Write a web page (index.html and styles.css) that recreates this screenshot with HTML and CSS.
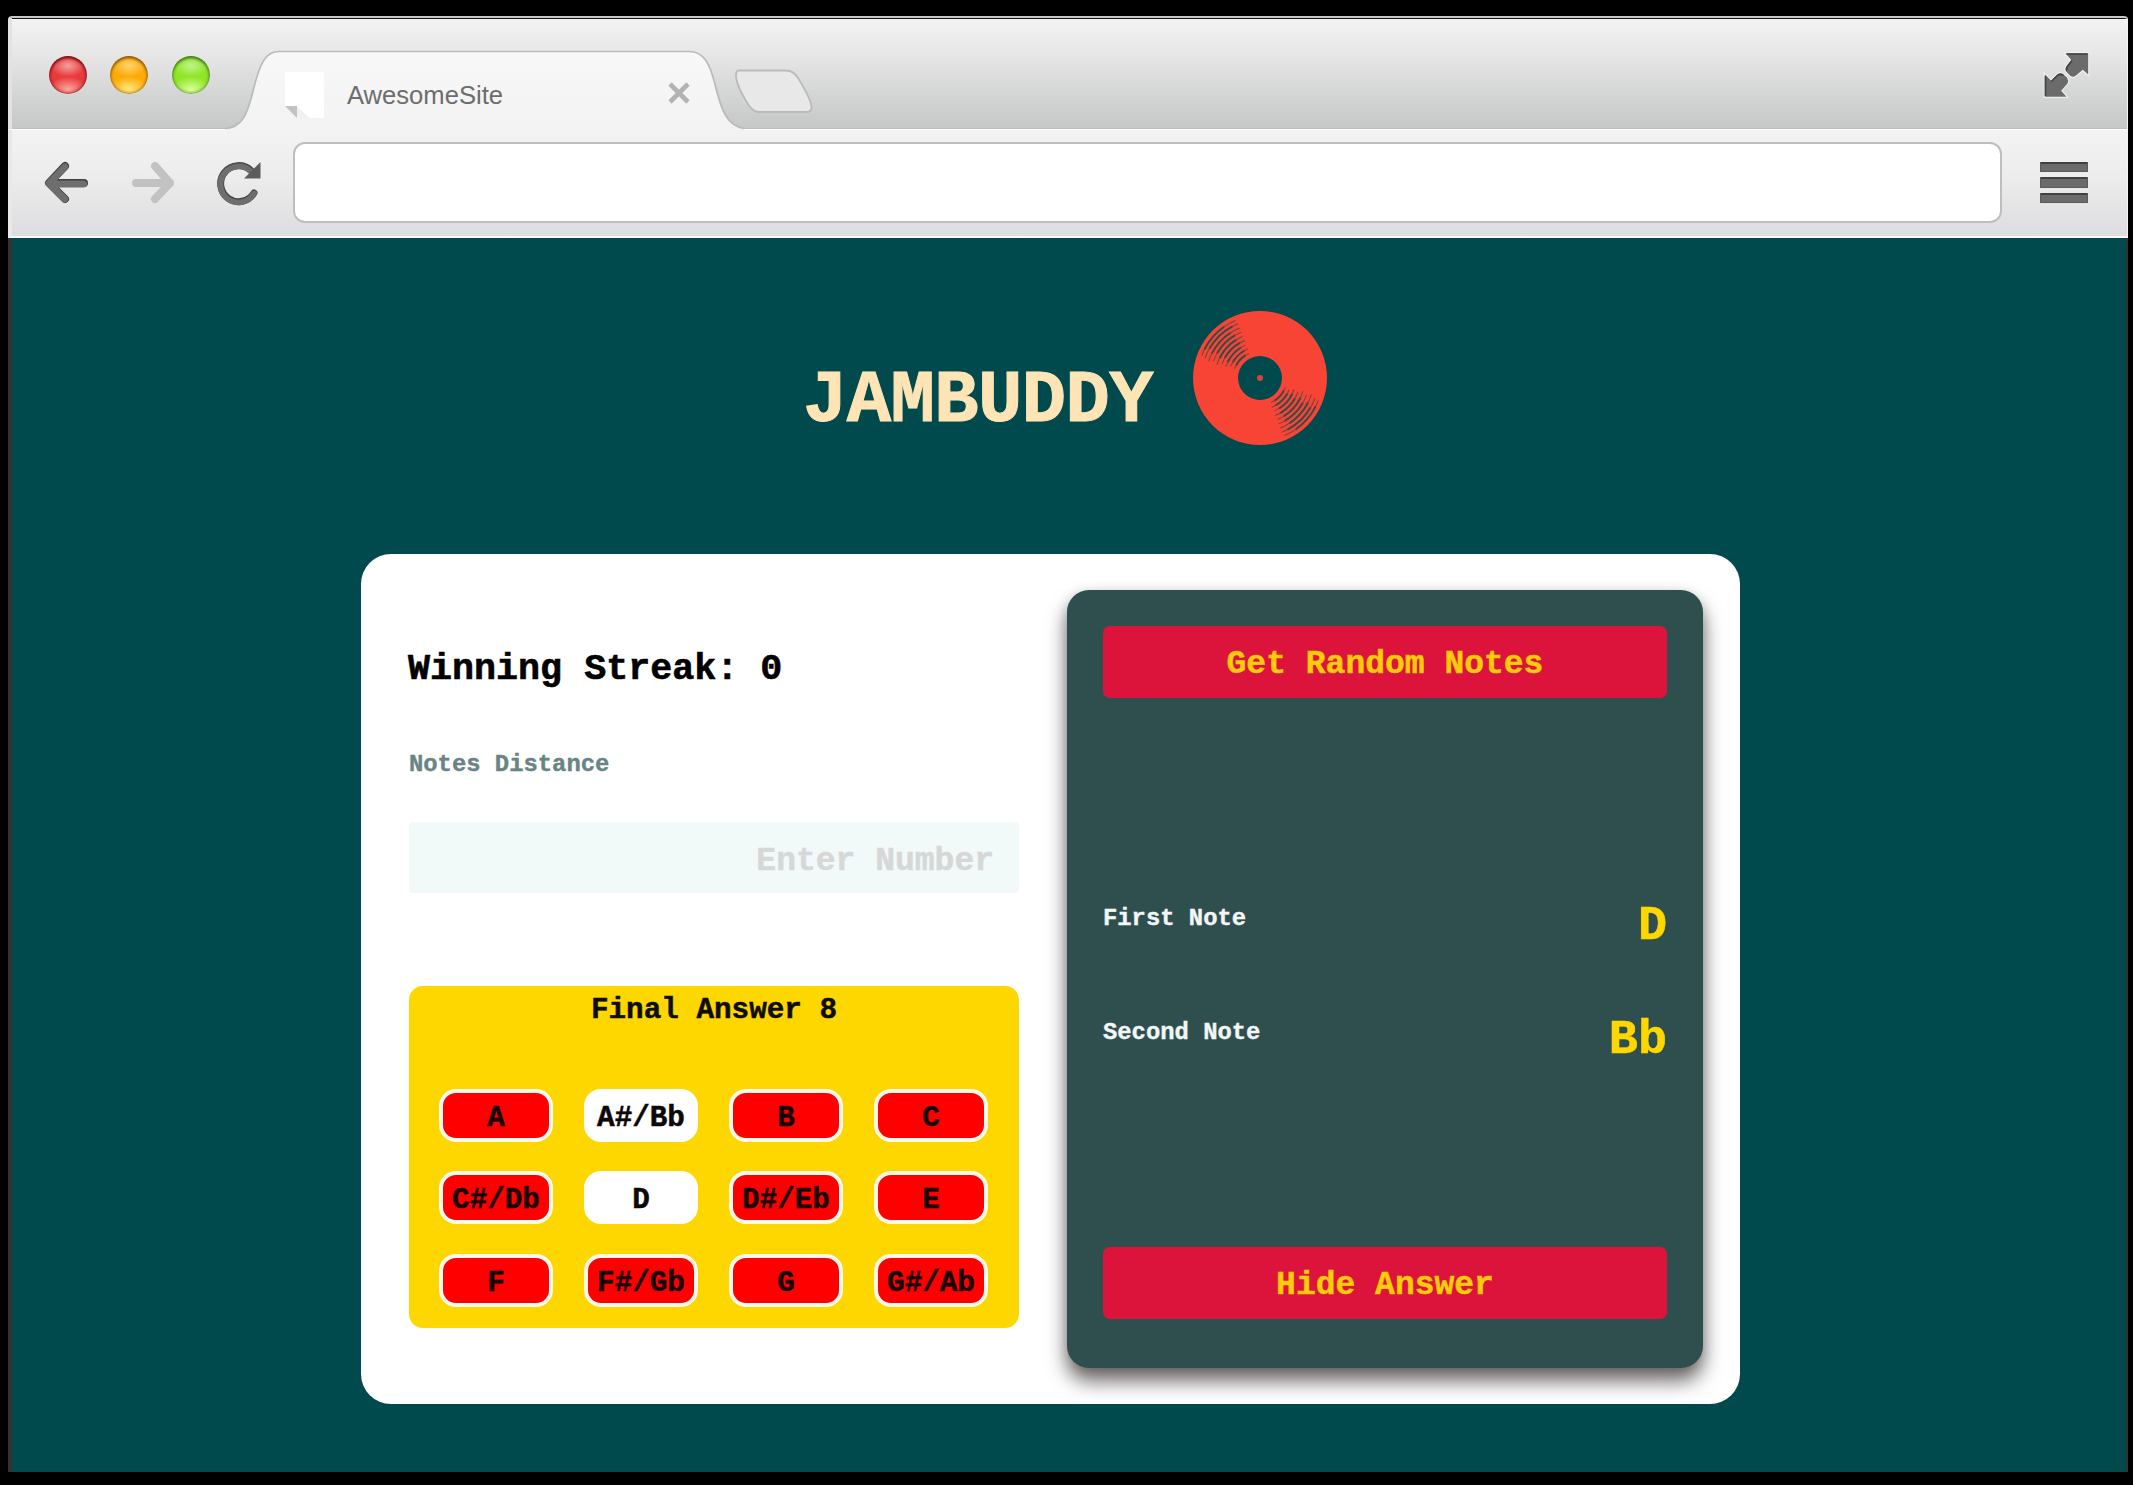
FILE: index.html
```html
<!DOCTYPE html>
<html lang="en">
<head>
<meta charset="utf-8">
<title>JamBuddy</title>
<link rel="stylesheet" href="styles.css">
</head>
<body>
<div class="window">
  <header class="titlebar">
    <div class="lights">
      <span class="light light-red"></span>
      <span class="light light-yellow"></span>
      <span class="light light-green"></span>
    </div>
    <div class="tab">
      <svg class="tab-shape" width="520" height="82" viewBox="0 0 520 82">
        <defs>
          <linearGradient id="tabFill" x1="0" y1="0" x2="0" y2="1">
            <stop offset="0" stop-color="#f8f8f8"/>
            <stop offset="1" stop-color="#f2f2f2"/>
          </linearGradient>
        </defs>
        <path d="M0 79C17 78 23 65 29 41C36 12 42 2 54 2H464C478 2 484 14 489 34C496 63 502 76 519 79V82H0Z" fill="url(#tabFill)"/>
        <path d="M0 78.500C17 78 22 65 28 41C35 12 41 1.500 54 1.500H464C479 1.500 485 14 490 34C497 63 503 76 519 78.500" fill="none" stroke="#b9bbba" stroke-width="1.600"/>
      </svg>
      <svg class="favicon" width="40" height="47" viewBox="0 0 40 47">
        <path d="M0 0H39V46H24L12 34H0Z" fill="#fff"/>
        <path d="M12 34L24 46H12Z" fill="#f1f1f1"/>
        <path d="M0 34H12V46Z" fill="#c2c2c2"/>
      </svg>
      <span class="tab-label">AwesomeSite</span>
      <svg class="tab-close" width="22" height="22" viewBox="0 0 22 22">
        <path d="M2 2L20 20M20 2L2 20" stroke="#b3b3b3" stroke-width="4.600"/>
      </svg>
    </div>
    <svg class="new-tab" width="78" height="45" viewBox="0 0 78 45">
      <path d="M4 1.500H51C57 1.500 60 4 63 9C69 19 76 30 76.500 38C76.500 42 75 43 72 43H24C19 43 16 40 13 35C8 27 1 16 1 6Q1 1.500 4 1.500Z" fill="#e8e8e8" stroke="#b9bbba" stroke-width="1.800"/>
    </svg>
    <svg class="expand" width="47" height="47" viewBox="0 0 47 47">
      <g fill="#6b6b6b" stroke="#f6f6f6" stroke-width="2" paint-order="stroke">
        <path d="M22.500 1.300H45.200V22.500L39.800 17.700L33 23.500Q30 26 27 23.500L24 20.500Q21.500 17.500 23.500 14L28.200 8Z"/>
        <path d="M1.800 22.300L8.200 28.700L14.500 22.200Q17.500 20 20.500 22.500L24 25.500Q26 28.500 24.500 31.500L18.200 38.700L23.500 44.700H1.800Z"/>
      </g>
      <path d="M23.500 2H44.500M24 19Q22.500 17 24.500 14.500L29 8.500M2.500 24V44M8.200 29.500L15 23Q18 21.500 20.500 23.500" fill="none" stroke="#424242" stroke-width="1.600"/>
    </svg>
  </header>

  <nav class="toolbar">
    <svg class="back" width="46" height="44" viewBox="0 0 46 44">
      <path d="M6 22H40M21 5L5 22L21 38" fill="none" stroke="#404040" stroke-width="8" stroke-linecap="round" stroke-linejoin="round"/>
      <path d="M6 23H39.500M21 6L5 22.500L20.500 38" fill="none" stroke="#6e6e6e" stroke-width="7" stroke-linecap="round" stroke-linejoin="round"/>
    </svg>
    <svg class="forward" width="46" height="44" viewBox="0 0 46 44">
      <path d="M40 22H6M25 5L40 22L25 38" fill="none" stroke="#c2c2c2" stroke-width="8" stroke-linecap="round" stroke-linejoin="round"/>
    </svg>
    <svg class="reload" width="46" height="46" viewBox="0 0 46 46">
      <path d="M38 32A18 18 0 1 1 35 9.500" fill="none" stroke="#484848" stroke-width="7" stroke-linecap="round"/>
      <path d="M38 32.500A18 18 0 1 1 35 10.500" fill="none" stroke="#6e6e6e" stroke-width="5.600" stroke-linecap="round"/>
      <path d="M44.500 1V17.500H28Z" fill="#5c5c5c"/>
    </svg>
    <div class="address"></div>
    <div class="menu"><span></span><span></span><span></span></div>
  </nav>

  <main class="page">
    <div class="brand">
      <h1>JAMBUDDY</h1>
      <svg class="disc" width="134" height="134" viewBox="-67 -67 134 134">
        <circle r="67" fill="#f84435"/>
        <g fill="none" stroke="#6b4842" stroke-width="1">
          <circle r="62.500" pathLength="360" stroke-dasharray="46 134" transform="rotate(21)"/>
          <circle r="58.500" pathLength="360" stroke-dasharray="48 132" transform="rotate(20)"/>
          <circle r="54" pathLength="360" stroke-dasharray="50 130" transform="rotate(18)"/>
          <circle r="49.500" pathLength="360" stroke-dasharray="48 132" transform="rotate(20)"/>
          <circle r="45" pathLength="360" stroke-dasharray="50 130" transform="rotate(17)"/>
          <circle r="40.500" pathLength="360" stroke-dasharray="48 132" transform="rotate(20)"/>
          <circle r="36" pathLength="360" stroke-dasharray="48 132" transform="rotate(18)"/>
          <circle r="31.500" pathLength="360" stroke-dasharray="46 134" transform="rotate(22)"/>
          <circle r="27" pathLength="360" stroke-dasharray="46 134" transform="rotate(20)"/>
        </g>
        <g fill="none" stroke="#344b4a" stroke-width="1.900">
          <circle r="62.500" pathLength="360" stroke-dasharray="28 152" transform="rotate(27)"/>
          <circle r="58.500" pathLength="360" stroke-dasharray="32 148" transform="rotate(30)"/>
          <circle r="54" pathLength="360" stroke-dasharray="30 150" transform="rotate(27)"/>
          <circle r="49.500" pathLength="360" stroke-dasharray="30 150" transform="rotate(30)"/>
          <circle r="45" pathLength="360" stroke-dasharray="32 148" transform="rotate(26)"/>
          <circle r="40.500" pathLength="360" stroke-dasharray="30 150" transform="rotate(30)"/>
          <circle r="36" pathLength="360" stroke-dasharray="32 148" transform="rotate(26)"/>
          <circle r="31.500" pathLength="360" stroke-dasharray="30 150" transform="rotate(30)"/>
          <circle r="27" pathLength="360" stroke-dasharray="30 150" transform="rotate(28)"/>
        </g>
        <circle r="22" fill="#00494d"/>
        <circle r="3" fill="#d8443a"/>
      </svg>
    </div>

    <section class="card">
      <div class="guess">
        <h2>Winning Streak: 0</h2>
        <div class="distance">Notes Distance</div>
        <div class="field">Enter Number</div>
        <div class="answer">
          <div class="answer-title">Final Answer 8</div>
          <div class="keys">
            <span class="key">A</span>
            <span class="key key-on">A#/Bb</span>
            <span class="key">B</span>
            <span class="key">C</span>
            <span class="key">C#/Db</span>
            <span class="key key-on">D</span>
            <span class="key">D#/Eb</span>
            <span class="key">E</span>
            <span class="key">F</span>
            <span class="key">F#/Gb</span>
            <span class="key">G</span>
            <span class="key">G#/Ab</span>
          </div>
        </div>
      </div>
      <div class="panel">
        <div class="button">Get Random Notes</div>
        <div class="notes">
          <div class="note"><span class="note-name">First Note</span><span class="note-value">D</span></div>
          <div class="note"><span class="note-name">Second Note</span><span class="note-value">Bb</span></div>
        </div>
        <div class="button">Hide Answer</div>
      </div>
    </section>
  </main>
</div>
</body>
</html>
```
FILE: styles.css
```css
* {
  box-sizing: border-box;
}

body {
  margin: 0;
  height: 1485px;
  padding: 16px 5px 13px 8px;
  background: #000;
  overflow: hidden;
}

svg {
  display: block;
  flex: none;
}

.window {
  width: 2120px;
  height: 1456px;
  display: flex;
  flex-direction: column;
}

/* Title bar */
.titlebar {
  height: 113px;
  display: flex;
  align-items: flex-start;
  border-top: 2px solid #c9c9c9;
  border-left: 4px solid #e2e2e2;
  border-right: 1px solid #f4f4f4;
  border-radius: 4px 4px 0 0;
  background: linear-gradient(#111 0, #111 1px, #f3f3f3 1px, #e4e5e4 40px, #c5c8c7 110px, #b4b6b5 111px);
}

.lights {
  display: flex;
  gap: 23.500px;
  padding: 38px 0 0 36.500px;
}

.light {
  width: 38px;
  height: 38px;
  border-radius: 50%;
}

.light-red {
  background: radial-gradient(ellipse 19px 13px at 50% 88%, #ffa79f, transparent), radial-gradient(ellipse 17px 11px at 50% 26%, #f3a09b, transparent), #e83a3c;
  box-shadow: inset 0 2px 3px #780b10, inset 0 0 3px 1px #a03032;
}

.light-yellow {
  background: radial-gradient(ellipse 19px 13px at 50% 88%, #ffec7f, transparent), radial-gradient(ellipse 17px 11px at 50% 26%, #ffd36c, transparent), #fdaa08;
  box-shadow: inset 0 2px 3px #8a5300, inset 0 0 3px 1px #b08028;
}

.light-green {
  background: radial-gradient(ellipse 19px 13px at 50% 88%, #d9ff9c, transparent), radial-gradient(ellipse 17px 11px at 50% 26%, #bff38a, transparent), #8fe626;
  box-shadow: inset 0 2px 3px #44731a, inset 0 0 3px 1px #74a04a;
}

.tab {
  position: relative;
  width: 520px;
  height: 82px;
  margin: 32px 0 0 15px;
  display: flex;
  align-items: flex-start;
}

.tab-shape {
  position: absolute;
  left: 0;
  top: 0;
}

.favicon {
  position: relative;
  margin: 22px 0 0 60px;
}

.tab-label {
  position: relative;
  width: 157px;
  margin: 29px 0 0 22.500px;
  font: 25.600px/32px "Liberation Sans", Arial, sans-serif;
  color: #6d6d6d;
  white-space: nowrap;
}

.tab-close {
  position: relative;
  margin: 32px 0 0 163.500px;
}

.new-tab {
  margin: 51px 0 0 -9.500px;
}

.expand {
  margin: 34px 37.500px 0 auto;
}

/* Toolbar */
.toolbar {
  height: 109px;
  padding: 0 39.500px 0 31.500px;
  display: flex;
  align-items: flex-start;
  border-left: 4px solid #e8e8e8;
  border-right: 1px solid #f4f4f4;
  border-top: 1px solid #fff;
  border-bottom: 2px solid #fafafa;
  background: linear-gradient(#f3f3f3, #ececec 45%, #dddde0);
}

.back {
  margin-top: 30.500px;
}

.forward {
  margin: 30.500px 0 0 40px;
}

.reload {
  margin: 30.500px 0 0 40.500px;
}

.address {
  width: 1709px;
  height: 81px;
  margin: 12px 0 0 31px;
  border: 2px solid #bdbebe;
  border-radius: 12px;
  background: #fff;
}

.menu {
  width: 47.500px;
  margin: 32px 0 0 auto;
  display: grid;
  gap: 5px;
}

.menu span {
  height: 10.300px;
  border-radius: 1px;
  background: #6b6b6b;
  border: 1px solid #5a5a5a;
  border-top: 2px solid #414141;
}

/* Page */
.page {
  flex: 1;
  display: flex;
  flex-direction: column;
  border-left: 4px solid #333;
  border-right: 2px solid #333;
  background: #00494d;
  font-family: "Liberation Mono", "Courier New", monospace;
  font-weight: 700;
}

.brand {
  display: flex;
  align-items: flex-start;
  padding: 73px 0 0 791px;
}

h1 {
  width: 356px;
  margin: 48px 34px 0 0;
  font-size: 73.900px;
  line-height: 84px;
  letter-spacing: -0.600px;
  color: #ffe4b5;
  -webkit-text-stroke: 1px #ffe4b5;
}

.card {
  width: 1379px;
  height: 850px;
  margin: 109px 0 0 349px;
  padding: 36px 37px 36px 48px;
  display: flex;
  justify-content: space-between;
  border-radius: 30px;
  background: #fff;
}

.guess {
  width: 610px;
  padding-top: 57px;
}

h2 {
  margin: 0 0 0 -1px;
  font-size: 36.700px;
  line-height: 44px;
  color: #000;
  -webkit-text-stroke: 0.600px #000;
}

.distance {
  margin-top: 58.500px;
  font-size: 23.850px;
  line-height: 30px;
  color: #688483;
  -webkit-text-stroke: 0.400px #688483;
}

.field {
  height: 71.500px;
  margin-top: 42px;
  padding: 8px 25px 0 0;
  font-size: 33px;
  line-height: 64px;
  text-align: right;
  color: #d6d8d8;
  -webkit-text-stroke: 0.500px #d6d8d8;
  background: #f2f9f9;
  border-radius: 4px;
}

.answer {
  height: 342px;
  margin-top: 93px;
  padding: 8px 30px 0;
  border-radius: 14px;
  background: #ffd700;
}

.answer-title {
  font-size: 29.300px;
  line-height: 34px;
  text-align: center;
  color: #0f0d00;
  -webkit-text-stroke: 0.500px #0f0d00;
}

.keys {
  margin-top: 60.500px;
  display: grid;
  grid-template-columns: repeat(4, 114px);
  column-gap: 31px;
  row-gap: 29.600px;
}

.key {
  height: 53px;
  padding-top: 2px;
  border: 4px solid #fff9ec;
  border-radius: 17px;
  font-size: 29.300px;
  line-height: 48px;
  text-align: center;
  color: #180000;
  -webkit-text-stroke: 0.500px #180000;
  background: #f00;
}

.key-on {
  border-color: #fff;
  background: #fff;
  color: #0a0a0a;
}

.panel {
  width: 636px;
  height: 778px;
  padding: 36px;
  display: flex;
  flex-direction: column;
  border-radius: 22px;
  background: #2f4f4f;
  box-shadow: 0 13px 20px rgba(10, 0, 0, 0.600), 0 2px 12px rgba(0, 0, 0, 0.120);
}

.button {
  height: 72px;
  padding-top: 6px;
  border-radius: 7px;
  font-size: 33px;
  line-height: 66px;
  text-align: center;
  color: #ffcb0a;
  -webkit-text-stroke: 0.500px #ffcb0a;
  background: #dc143c;
}

.notes {
  height: 548.500px;
  padding-top: 200.300px;
  display: flex;
  flex-direction: column;
  gap: 58px;
}

.note {
  height: 56px;
  display: flex;
  justify-content: space-between;
  align-items: flex-start;
}

.note-name {
  margin-top: 5.700px;
  font-size: 23.850px;
  line-height: 30px;
  color: #f2f6f6;
  -webkit-text-stroke: 0.400px #f2f6f6;
}

.note-value {
  font-size: 48.500px;
  line-height: 57px;
  color: #ffd700;
  -webkit-text-stroke: 0.500px #ffd700;
}
```
